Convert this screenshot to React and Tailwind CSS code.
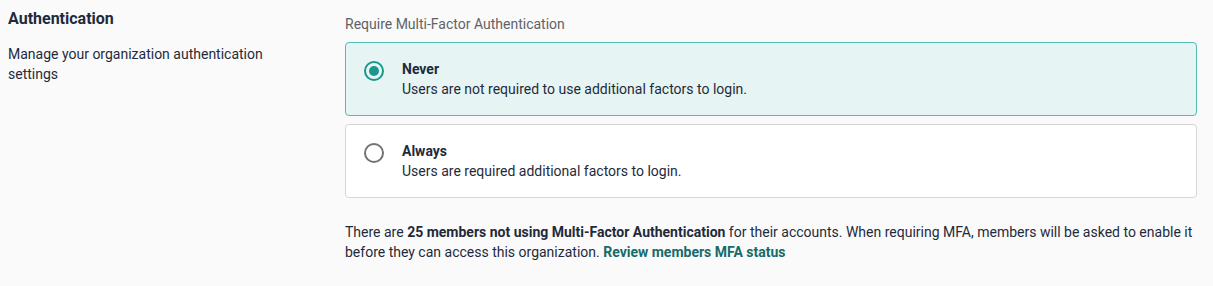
import React, { useState } from 'react'

const options = [
  {
    id: 'never',
    title: 'Never',
    description: 'Users are not required to use additional factors to login.',
  },
  {
    id: 'always',
    title: 'Always',
    description: 'Users are required additional factors to login.',
  },
]

const Radio = ({ checked }) => (
  <span
    className={`mt-[2px] flex h-5 w-5 shrink-0 items-center justify-center rounded-full border-2 ${
      checked ? 'border-[#1b978d]' : 'border-[#737373]'
    }`}
  >
    {checked && <span className="h-[10px] w-[10px] rounded-full bg-[#1b978d]" />}
  </span>
)

const App = () => {
  const [mfa, setMfa] = useState('never')

  return (
    <div
      className="min-h-[286px] w-full bg-[#fafafa] text-[#1f2a3a]"
      style={{ fontFamily: 'Roboto, "Liberation Sans", sans-serif' }}
    >
      <div className="flex pt-[7px] pr-4">
        {/* Left: section info */}
        <div className="w-[345px] shrink-0 pl-2 pr-6">
          <h2 className="text-base font-bold leading-6">Authentication</h2>
          <p className="mt-[13px] w-[290px] text-sm leading-5">
            Manage your organization authentication settings
          </p>
        </div>

        {/* Right: settings */}
        <div className="flex-1 pt-[7px]">
          <p className="text-sm leading-5 text-[#5f6368]">Require Multi-Factor Authentication</p>

          <div className="mt-2 flex flex-col gap-2">
            {options.map((opt) => {
              const checked = mfa === opt.id
              return (
                <button
                  key={opt.id}
                  onClick={() => setMfa(opt.id)}
                  className={`flex items-start gap-[18px] rounded border py-4 pl-[18px] text-left ${
                    checked ? 'border-[#4fbdb5] bg-[#e6f5f4]' : 'border-[#d6d6d6] bg-white'
                  }`}
                >
                  <Radio checked={checked} />
                  <span className="flex flex-col">
                    <span className="text-sm font-bold leading-5">{opt.title}</span>
                    <span className="text-sm leading-5">{opt.description}</span>
                  </span>
                </button>
              )
            })}
          </div>

          <p className="mt-6 text-sm leading-5">
            There are <strong className="font-bold">25 members not using Multi-Factor Authentication</strong> for
            their accounts. When requiring MFA, members will be asked to enable it before they can access this
            organization.{' '}
            <a href="#" className="font-bold text-[#166b68]">
              Review members MFA status
            </a>
          </p>
        </div>
      </div>
    </div>
  )
}

export default App
